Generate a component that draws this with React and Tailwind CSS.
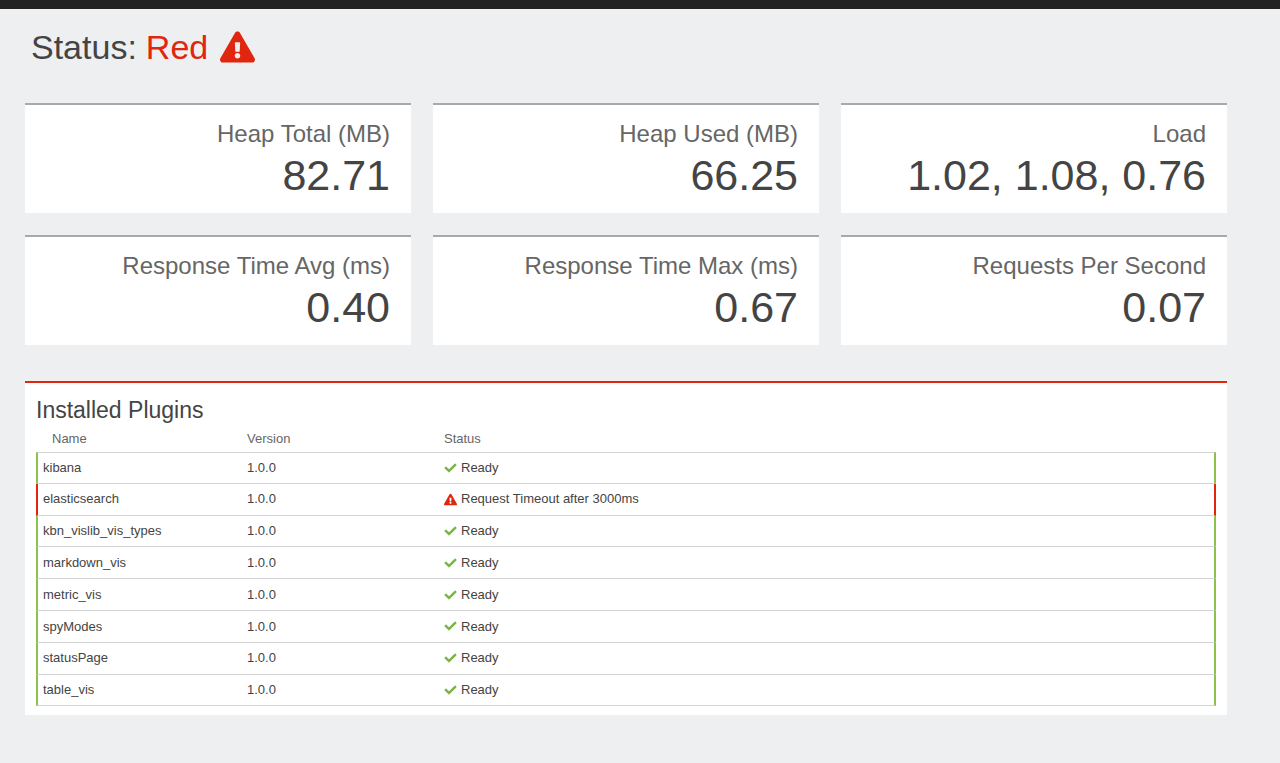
import React from 'react'
import { FaCheck, FaExclamationTriangle } from 'react-icons/fa'

const metrics = [
  { label: 'Heap Total (MB)', value: '82.71' },
  { label: 'Heap Used (MB)', value: '66.25' },
  { label: 'Load', value: '1.02, 1.08, 0.76' },
  { label: 'Response Time Avg (ms)', value: '0.40' },
  { label: 'Response Time Max (ms)', value: '0.67' },
  { label: 'Requests Per Second', value: '0.07' },
]

const plugins = [
  { name: 'kibana', version: '1.0.0', ok: true, message: 'Ready' },
  { name: 'elasticsearch', version: '1.0.0', ok: false, message: 'Request Timeout after 3000ms' },
  { name: 'kbn_vislib_vis_types', version: '1.0.0', ok: true, message: 'Ready' },
  { name: 'markdown_vis', version: '1.0.0', ok: true, message: 'Ready' },
  { name: 'metric_vis', version: '1.0.0', ok: true, message: 'Ready' },
  { name: 'spyModes', version: '1.0.0', ok: true, message: 'Ready' },
  { name: 'statusPage', version: '1.0.0', ok: true, message: 'Ready' },
  { name: 'table_vis', version: '1.0.0', ok: true, message: 'Ready' },
]

function MetricCard({ label, value }) {
  return (
    <div className="bg-white border-t-2 border-[#a9a9a9] h-[110px] pr-[21px] pt-[14px] text-right">
      <div className="text-[24px] leading-[30px] text-[#666]">{label}</div>
      <div className="text-[43px] leading-[48px] mt-[2px] text-[#444]">{value}</div>
    </div>
  )
}

function PluginRow({ plugin, first }) {
  const side = plugin.ok ? 'border-[#8bc34a]' : 'border-[#e0260e]'
  return (
    <div className={`flex items-center h-[31.8px] border-l-2 border-r-2 ${side} border-b border-b-[#d4d4d4] ${first ? 'border-t border-t-[#d4d4d4]' : ''} text-[13px] text-[#444]`}>
      <div className="w-[209px] pl-[5px]">{plugin.name}</div>
      <div className="w-[197px]">{plugin.version}</div>
      <div className="flex items-center gap-[4px]">
        {plugin.ok ? (
          <FaCheck className="text-[#7cb342] w-[13px] h-[12px]" />
        ) : (
          <FaExclamationTriangle className="text-[#e0260e] w-[13px] h-[13px]" />
        )}
        <span>{plugin.message}</span>
      </div>
    </div>
  )
}

export default function App() {
  return (
    <div className="min-h-[763px] bg-[#eeeff1] font-['Liberation_Sans',Arial,sans-serif]">
      <div className="h-[9px] bg-[#222]" />
      <div className="pl-[25px] pr-[53px]">
        <h1 className="flex items-center pl-[6px] pt-[0px] h-[76px] text-[34px] leading-[40px] text-[#444]">
          <span>Status:</span>
          <span className="ml-[9px] text-[#e0260e]">Red</span>
          <FaExclamationTriangle className="ml-[12px] w-[35px] h-[32px] text-[#e0260e]" />
        </h1>

        <div className="grid grid-cols-3 gap-x-[22px] gap-y-[22px] mt-[18px]">
          {metrics.map((m) => (
            <MetricCard key={m.label} label={m.label} value={m.value} />
          ))}
        </div>

        <div className="mt-[36px] bg-white border-t-2 border-[#e0260e] px-[11px] pb-[9px]">
          <h2 className="text-[23px] leading-[28px] text-[#444] pt-[13px]">Installed Plugins</h2>
          <div className="flex text-[13px] text-[#666] h-[28px] pt-[2px] items-center">
            <div className="w-[211px] pl-[16px]">Name</div>
            <div className="w-[197px]">Version</div>
            <div>Status</div>
          </div>
          {plugins.map((p, i) => (
            <PluginRow key={p.name} plugin={p} first={i === 0} />
          ))}
        </div>
      </div>
    </div>
  )
}
